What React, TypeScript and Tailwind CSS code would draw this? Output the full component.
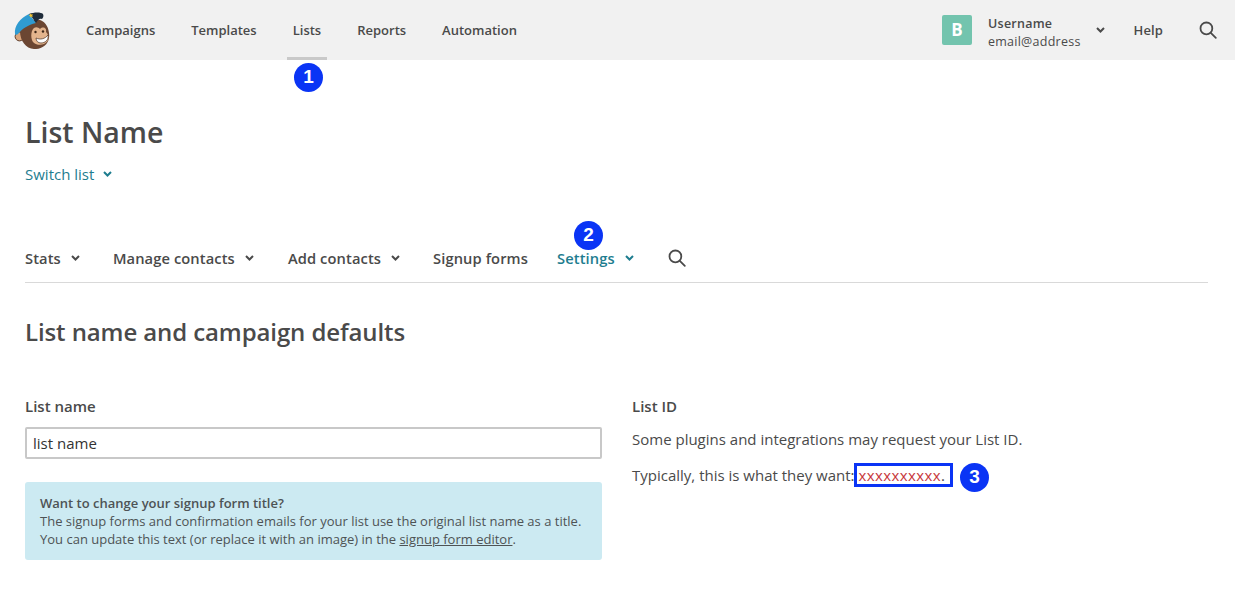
import { FunctionComponent } from "react";

const Logo: FunctionComponent = () => (
  <svg width="38" height="38" viewBox="0 0 38 38" className="block">
    <circle cx="5.5" cy="25.5" r="4.4" fill="#d9a57c" stroke="#5e3d2c" strokeWidth="1" />
    <path d="M6 20 C8 12 18 7 26 9 C33 11 36 20 35 27 C34 34 27 38.5 20 38 C12 37.5 6 30 6 20 Z" fill="#6b4632" />
    <path d="M18 20 C20 15 24 16 26 18 C29 15 33 17 32 21 C36 25 35 31 30 33 C25 35 19 33 18 29 C17 26 17 23 18 20 Z" fill="#e3b48d" />
    <path d="M22 27 C26 29 31 28 34 24 C35 29 31 32 27 32 C24 32 22 30 22 27 Z" fill="#fff" stroke="#4b2f21" strokeWidth="0.7" />
    <circle cx="21.5" cy="21" r="1.2" fill="#3c2618" />
    <circle cx="29" cy="20.5" r="1.2" fill="#3c2618" />
    <path d="M1 23 C0 15 6 7 15 3 L22 12 C14 14 8 18 5 22 C3 24 1.5 24.5 1 23 Z" fill="#2f9bd1" />
    <path d="M15 3 C20 1 27 1 29 3 C30 5 29 7 28 8 C25 7 24 9 22 12 C20 9 18 6 15 3 Z" fill="#1f2c3a" />
    <path d="M16 2.5 l1.2 1 1.5 -.5 -.5 1.4 1 1.2 -1.6 0 -.9 1.2 -.5 -1.5 -1.5 -.5 1.3 -.9 Z" fill="#f2c230" />
  </svg>
);

const Search: FunctionComponent<{ size: number; color?: string }> = ({ size, color = "#4a4a4a" }) => (
  <svg width={size} height={size} viewBox="0 0 18 18" fill="none" stroke={color} strokeWidth="1.8" strokeLinecap="round" className="block">
    <circle cx="7.4" cy="7.4" r="5.9" />
    <path d="M11.8 11.8 L16.8 16.8" />
  </svg>
);

const Chevron: FunctionComponent<{ color?: string }> = ({ color = "#4a4a4a" }) => (
  <svg width="9" height="6" viewBox="0 0 9 6" fill="none" stroke={color} strokeWidth="2" className="block">
    <path d="M1 1 L4.5 4.5 L8 1" />
  </svg>
);

const Badge: FunctionComponent<{ n: number; className: string }> = ({ n, className }) => (
  <div
    className={`absolute w-[29px] h-[29px] rounded-full bg-[#0a34f5] text-white flex items-center justify-center text-[19px] font-bold font-['Liberation_Sans',sans-serif] ${className}`}
  >
    {n}
  </div>
);

const topLinks = ["Campaigns", "Templates", "Lists", "Reports", "Automation"];

const App: FunctionComponent = () => {
  return (
    <div className="relative w-[1235px] h-[600px] overflow-hidden bg-white text-[#4a4a4a] font-['Open_Sans',sans-serif]">
      <header className="h-[60px] bg-[#f1f1f1] flex items-center pl-[14px] pr-[18px]">
        <Logo />
        <nav className="flex gap-[36px] ml-[34px] text-[13px] leading-[20px] font-semibold">
          {topLinks.map((link) => (
            <a key={link} className="relative block">
              {link}
              {link === "Lists" && (
                <span className="absolute left-[-6px] right-[-6px] top-[37px] h-[3px] bg-[#c9c9c9]" />
              )}
            </a>
          ))}
        </nav>
        <div className="ml-auto flex items-center">
          <div className="w-[30px] h-[30px] rounded-[2px] bg-[#73c4ae] text-white flex items-center justify-center text-[17px] font-bold">
            B
          </div>
          <div className="ml-[16px] pt-[5px] text-[12.5px] leading-[18px] tracking-[0.25px]">
            <div className="font-semibold">Username</div>
            <div>email@address</div>
          </div>
          <div className="ml-[15px] -mt-[1px]">
            <Chevron />
          </div>
          <a className="ml-[29px] pt-[1px] text-[13px] font-semibold tracking-[0.1px]">Help</a>
          <div className="ml-[36px]">
            <Search size={18} />
          </div>
        </div>
      </header>

      <main className="px-[25px]">
        <h1 className="mt-[52px] text-[28.5px] leading-[40px] font-semibold">List Name</h1>
        <a className="mt-[12px] flex items-center gap-[9px] text-[15px] leading-[20px] text-[#1e7d8f]">
          Switch list
          <Chevron color="#1e7d8f" />
        </a>

        <nav className="mt-[64px] w-[1183px] h-[35px] border-b border-[#d9d9d9] flex items-start text-[14.7px] leading-[20px] font-semibold tracking-[0.1px]">
          <a className="flex items-center gap-[10px]">
            Stats <Chevron />
          </a>
          <a className="ml-[33px] flex items-center gap-[10px]">
            Manage contacts <Chevron />
          </a>
          <a className="ml-[34px] flex items-center gap-[10px]">
            Add contacts <Chevron />
          </a>
          <a className="ml-[33px]">Signup forms</a>
          <a className="ml-[29px] flex items-center gap-[10px] text-[#1e7d8f]">
            Settings <Chevron color="#1e7d8f" />
          </a>
          <div className="ml-[34px] mt-[1px]">
            <Search size={18} />
          </div>
        </nav>

        <h2 className="mt-[32px] text-[24px] leading-[34px] font-semibold tracking-[-0.1px]">
          List name and campaign defaults
        </h2>

        <div className="mt-[47px] flex">
          <section className="w-[577px]">
            <label className="block text-[15px] leading-[20px] font-semibold">List name</label>
            <input
              readOnly
              value="list name"
              className="mt-[11px] block w-full h-[32px] px-[6px] border-2 border-[#c8c8c8] rounded-[2px] bg-white text-[15px] text-[#333] outline-none"
            />
            <div className="mt-[23px] h-[78px] rounded-[3px] bg-[#cceaf2] px-[15px] pt-[12px] text-[13px] leading-[18px] text-[#4e5355]">
              <div className="font-semibold">Want to change your signup form title?</div>
              <div>The signup forms and confirmation emails for your list use the original list name as a title.</div>
              <div>
                You can update this text (or replace it with an image) in the <span className="underline">signup form editor</span>.
              </div>
            </div>
          </section>

          <section className="ml-[30px] text-[15px] leading-[20px]">
            <div className="font-semibold">List ID</div>
            <p className="mt-[13px]">Some plugins and integrations may request your List ID.</p>
            <p className="mt-[14px] flex items-center">
              Typically, this is what they want:
              <span className="-ml-[1px] border-[3px] border-[#0a34f5] h-[24px] w-[99px] flex items-center pl-[2px] text-[15px] tracking-[0.4px] text-[#c8383c]">
                xxxxxxxxxx<span className="text-[#4a4a4a]">.</span>
              </span>
            </p>
          </section>
        </div>
      </main>

      <Badge n={1} className="left-[294px] top-[63px]" />
      <Badge n={2} className="left-[574px] top-[221px]" />
      <Badge n={3} className="left-[960px] top-[463px]" />
    </div>
  );
};

export default App;
